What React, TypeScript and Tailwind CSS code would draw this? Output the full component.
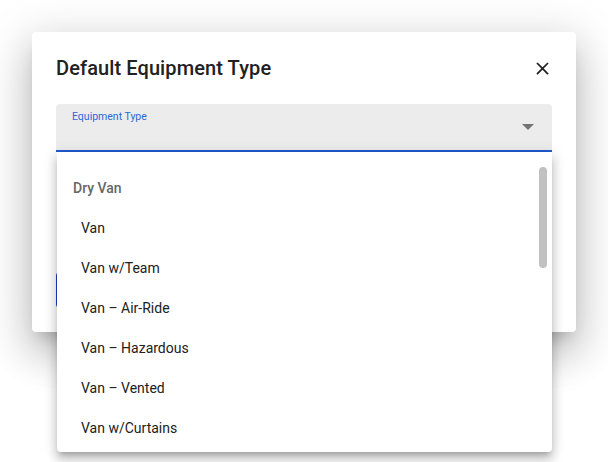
import React from "react";

const items = [
  "Van",
  "Van w/Team",
  "Van \u2013 Air-Ride",
  "Van \u2013 Hazardous",
  "Van \u2013 Vented",
  "Van w/Curtains",
];

export default function App() {
  return (
    <div
      className="w-[608px] h-[462px] bg-white overflow-hidden"
      style={{ fontFamily: "Roboto, 'Liberation Sans', sans-serif" }}
    >
      <div className="pt-8 pl-8">
        <div className="w-[544px] h-[300px] bg-white rounded-[4px] shadow-[0_11px_15px_-7px_rgba(0,0,0,0.2),0_24px_38px_3px_rgba(0,0,0,0.14),0_9px_46px_8px_rgba(0,0,0,0.12)] px-6 pt-5 pb-6 flex flex-col">
          <div className="h-8 flex items-center justify-between">
            <h2 className="text-[20px] leading-8 font-medium text-[#212121] tracking-[0.1px]">
              Default Equipment Type
            </h2>
            <button className="w-6 h-6 -mr-[2px] flex items-center justify-center text-[#212121]">
              <svg width="21" height="21" viewBox="0 0 24 24" fill="currentColor">
                <path d="M19 6.41 17.59 5 12 10.59 6.41 5 5 6.41 10.59 12 5 17.59 6.41 19 12 13.41 17.59 19 19 17.59 13.41 12z" />
              </svg>
            </button>
          </div>

          <div className="relative mt-5">
            <div className="h-12 bg-[#ececec] rounded-t-[4px] border-b-2 border-[#1f5bd0] relative">
              <span className="absolute left-4 top-[7px] text-[10.5px] leading-3 text-[#2f66d6]">
                Equipment Type
              </span>
              <svg
                className="absolute right-[18px] top-[20px]"
                width="12"
                height="6"
                viewBox="0 0 10 5"
                fill="#757575"
              >
                <path d="M0 0 L5 5 L10 0 Z" />
              </svg>
            </div>

            <div className="absolute left-[1px] right-0 top-full h-[300px] bg-white rounded-b-[4px] overflow-hidden shadow-[0_5px_5px_-3px_rgba(0,0,0,0.2),0_8px_10px_1px_rgba(0,0,0,0.14),0_3px_14px_2px_rgba(0,0,0,0.12)] z-10">
              <div className="pt-4">
                <div className="h-10 flex items-center pl-4 text-[14px] font-medium text-[#666666]">
                  Dry Van
                </div>
                {items.map((it) => (
                  <div
                    key={it}
                    className="h-10 flex items-center pl-6 text-[14px] text-[#212121]"
                  >
                    {it}
                  </div>
                ))}
              </div>
              <div className="absolute right-[5px] top-[15px] w-2 h-[101px] rounded-full bg-[#c1c1c1]" />
            </div>
          </div>

          <div className="flex-1" />
          <div className="h-9 flex">
            <button className="h-9 w-[90px] rounded-[4px] bg-[#1e3fbf] text-white text-[14px] font-medium">
              SAVE
            </button>
          </div>
        </div>
      </div>
    </div>
  );
}
